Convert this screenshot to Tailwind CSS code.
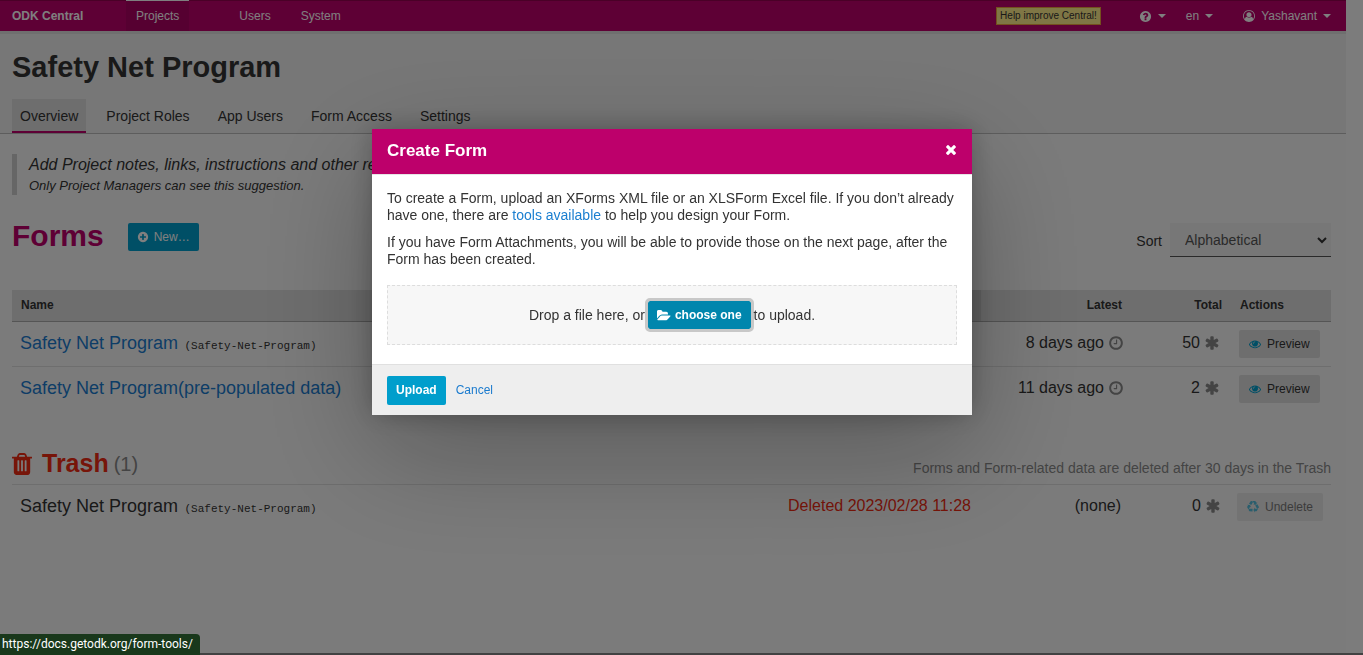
<!DOCTYPE html>
<html lang="en">
<head>
<meta charset="utf-8">
<meta name="viewport" content="width=device-width, initial-scale=1">
<title>ODK Central</title>
<script src="https://cdn.jsdelivr.net/npm/@tailwindcss/browser@4"></script>
</head>
<body class="bg-[#f7f7f7] font-['Liberation_Sans',Arial,sans-serif] text-sm text-[#333]">
<svg class="hidden" aria-hidden="true">
  <symbol id="question" viewBox="0 0 1792 1792"><path d="M1024 1376v-192q0-14-9-23t-23-9h-192q-14 0-23 9t-9 23v192q0 14 9 23t23 9h192q14 0 23-9t9-23zm256-672q0-88-55.5-163t-138.5-116-170-41q-243 0-371 213-15 24 8 42l132 100q7 6 19 6 16 0 25-12 53-68 86-92 34-24 86-24 48 0 85.5 26t37.5 59q0 38-20 61t-68 45q-63 28-115.5 86.5t-52.5 125.5v36q0 14 9 23t23 9h192q14 0 23-9t9-23q0-19 21.5-49.5t54.5-49.5q32-18 49-28.5t46-35 44.5-48 28-60.5 12.5-81zm384 192q0 209-103 385.5t-279.5 279.5-385.5 103-385.5-103-279.5-279.5-103-385.5 103-385.5 279.5-279.5 385.5-103 385.5 103 279.5 279.5 103 385.5z"/></symbol>
  <symbol id="user" viewBox="0 0 1792 1792"><path d="M896 0q182 0 348 71t286 191 191 286 71 348q0 181-70.5 347t-190.5 286-286 191.5-349 71.5-349-71-285.5-191.5-190.5-286-71-347.5 71-348 191-286 286-191 348-71zm619 1351q149-205 149-455 0-156-61-298t-164-245-245-164-298-61-298 61-245 164-164 245-61 298q0 250 149 455 66-327 306-327 131 128 313 128t313-128q240 0 306 327zm-235-647q0-159-112.5-271.5t-271.5-112.5-271.5 112.5-112.5 271.5 112.5 271.5 271.5 112.5 271.5-112.5 112.5-271.5z"/></symbol>
  <symbol id="plus" viewBox="0 0 1792 1792"><path d="M1344 960v-128q0-26-19-45t-45-19h-256v-256q0-26-19-45t-45-19h-128q-26 0-45 19t-19 45v256h-256q-26 0-45 19t-19 45v128q0 26 19 45t45 19h256v256q0 26 19 45t45 19h128q26 0 45-19t19-45v-256h256q26 0 45-19t19-45zm320-64q0 209-103 385.5t-279.5 279.5-385.5 103-385.5-103-279.5-279.5-103-385.5 103-385.5 279.5-279.5 385.5-103 385.5 103 279.5 279.5 103 385.5z"/></symbol>
  <symbol id="clock" viewBox="0 0 1792 1792"><path d="M1024 544v448q0 14-9 23t-23 9h-320q-14 0-23-9t-9-23v-64q0-14 9-23t23-9h224v-352q0-14 9-23t23-9h64q14 0 23 9t9 23zm416 352q0-148-73-273t-198-198-273-73-273 73-198 198-73 273 73 273 198 198 273 73 273-73 198-198 73-273zm224 0q0 209-103 385.5t-279.5 279.5-385.5 103-385.5-103-279.5-279.5-103-385.5 103-385.5 279.5-279.5 385.5-103 385.5 103 279.5 279.5 103 385.5z"/></symbol>
  <symbol id="asterisk" viewBox="0 0 1792 1792"><path d="M1546 1050q46 26 59.5 77.5t-12.5 97.5l-64 110q-26 46-77.5 59.5t-97.5-12.5l-266-153v307q0 52-38 90t-90 38h-128q-52 0-90-38t-38-90v-307l-266 153q-46 26-97.5 12.5t-77.5-59.5l-64-110q-26-46-12.5-97.5t59.5-77.5l266-154-266-154q-46-26-59.5-77.5t12.5-97.5l64-110q26-46 77.5-59.5t97.5 12.5l266 153v-307q0-52 38-90t90-38h128q52 0 90 38t38 90v307l266-153q46-26 97.5-12.5t77.5 59.5l64 110q26 46 12.5 97.5t-59.5 77.5l-266 154z"/></symbol>
  <symbol id="eye" viewBox="0 0 1792 1792"><path d="M1664 960q-152-236-381-353 61 104 61 225 0 185-131.5 316.5t-316.5 131.5-316.5-131.5-131.5-316.5q0-121 61-225-229 117-381 353 133 205 333.5 326.5t434.5 121.5 434.5-121.5 333.5-326.5zm-720-384q0-20-14-34t-34-14q-125 0-214.5 89.5t-89.5 214.5q0 20 14 34t34 14 34-14 14-34q0-86 61-147t147-61q20 0 34-14t14-34zm848 384q0 34-20 69-140 230-376.5 368.5t-499.5 138.5-499.5-139-376.5-368q-20-35-20-69t20-69q140-229 376.5-368t499.5-139 499.5 139 376.5 368q20 35 20 69z"/></symbol>
  <symbol id="trash" viewBox="192 128 1408 1536"><path d="M704 1376v-704q0-14-9-23t-23-9h-64q-14 0-23 9t-9 23v704q0 14 9 23t23 9h64q14 0 23-9t9-23zm256 0v-704q0-14-9-23t-23-9h-64q-14 0-23 9t-9 23v704q0 14 9 23t23 9h64q14 0 23-9t9-23zm256 0v-704q0-14-9-23t-23-9h-64q-14 0-23 9t-9 23v704q0 14 9 23t23 9h64q14 0 23-9t9-23zm-544-992h448l-48-117q-7-9-17-11h-317q-10 2-17 11zm928 32v64q0 14-9 23t-23 9h-96v948q0 83-47 143.5t-113 60.5h-832q-66 0-113-58.5t-47-141.5v-952h-96q-14 0-23-9t-9-23v-64q0-14 9-23t23-9h309l70-167q15-37 54-63t79-26h320q40 0 79 26t54 63l70 167h309q14 0 23 9t9 23z"/></symbol>
  <symbol id="recycle" viewBox="0 0 1792 1792"><path d="M836 1169l-15 368-2 22-420-29q-36-3-67-31.5t-47-65.5q-11-27-14.5-55t4-65 12-55 21.5-64 19-53q78 12 509 28zm-387-586l180 379-147-92q-63 72-111.5 144.5t-72.5 125-39.5 94.5-18.5 63l-4 21-190-357q-17-26-18-56t6-47l8-18q35-63 114-188l-140-86zm1231 517l-188 359q-12 29-36.5 46.5t-43.5 20.5l-18 4q-71 7-219 12l8 164-230-367 211-362 7 173q170 16 283 5t170-33zm-785-924q-47 63-265 435l-317-187-19-12 225-356q20-31 60-45t80-10q24 2 48.5 12t42 21 41.5 33 36 34.5 36 39.5 32 35zm655 307l212 363q18 37 12.5 76t-27.5 74q-13 20-33 37t-38 28-48.5 22-47 16-51.5 14-46 12q-34-72-265-436l313-195zm-143-226l142-83-220 373-419-20 151-86q-34-89-75-166t-75.5-123.5-64.5-80-47-46.5l-17-13 405 1q31-3 58 10.5t39 28.5l11 15q39 61 112 190z"/></symbol>
  <symbol id="folder" viewBox="0 0 1856 1792"><path d="M1815 952q0 31-31 66l-336 396q-43 51-120.5 86.5t-143.5 35.5h-1088q-34 0-60.5-13t-26.5-43q0-31 31-66l336-396q43-51 120.5-86.5t143.5-35.5h1088q34 0 60.5 13t26.5 43zm-343-344v160h-832q-94 0-197 47.5t-164 119.5l-337 396-5 6q0-4-.5-12.5t-.5-12.5v-960q0-92 66-158t158-66h320q92 0 158 66t66 158v32h544q92 0 158 66t66 158z"/></symbol>
  <symbol id="times" viewBox="302 238 1188 1316"><path d="M1490 1322q0 40-28 68l-136 136q-28 28-68 28t-68-28l-294-294-294 294q-28 28-68 28t-68-28l-136-136q-28-28-28-68t28-68l294-294-294-294q-28-28-28-68t28-68l136-136q28-28 68-28t68 28l294 294 294-294q28-28 68-28t68 28l136 136q28 28 28 68t-28 68l-294 294 294 294q28 28 28 68z"/></symbol>
  <symbol id="caret" viewBox="0 0 8 4"><path d="M0 0h8L4 4z"/></symbol>
  <symbol id="chevron" viewBox="0 0 10 7"><path d="M1 1l4 4 4-4" fill="none" stroke="currentColor" stroke-width="2"/></symbol>
</svg>

<div class="flex min-h-screen border-b-2 border-[#848484]">
<div class="min-w-0 flex-1">
  <nav class="relative flex h-[31px] items-stretch border-t border-[#95004f] bg-[#bd006b] text-xs text-white shadow-[0_3px_0_#dfdfdf]">
    <a href="#" class="flex w-[114px] items-center pl-3 font-bold">ODK Central</a>
    <a href="#" class="-mt-px ml-3 flex items-center border-t border-white bg-[#ad0062] px-[10px]">Projects</a>
    <a href="#" class="ml-10 flex items-center px-[10px]">Users</a>
    <a href="#" class="ml-[10px] flex items-center px-[10px]">System</a>
    <div class="ml-auto flex items-center pr-[15px]">
      <button class="mr-[38px] h-[18px] border border-[#e8a03c] bg-[#ffec8b] px-[3px] text-[10px] leading-4 text-[#333]">Help improve Central!</button>
      <button class="mr-5 flex items-center gap-[6px]" aria-label="Help"><svg class="size-[13px] fill-current"><use href="#question"/></svg><svg class="h-1 w-2 fill-current"><use href="#caret"/></svg></button>
      <button class="mr-[30px] flex items-center gap-[6px]">en<svg class="h-1 w-2 fill-current"><use href="#caret"/></svg></button>
      <button class="flex items-center gap-[6px]"><svg class="size-3 fill-current"><use href="#user"/></svg>Yashavant<svg class="h-1 w-2 fill-current"><use href="#caret"/></svg></button>
    </div>
  </nav>

  <header class="border-b border-[#bbb] bg-[#eee] px-3 pt-[17px]">
    <h1 class="text-[29px] leading-[38px] font-bold">Safety Net Program</h1>
    <div class="mt-[13px] flex gap-3 leading-[34px]">
      <a href="#" class="h-[34px] border-b-2 border-[#bd006b] bg-[#ddd] px-2">Overview</a>
      <a href="#" class="h-[34px] px-2">Project Roles</a>
      <a href="#" class="h-[34px] px-2">App Users</a>
      <a href="#" class="h-[34px] px-2">Form Access</a>
      <a href="#" class="h-[34px] px-2">Settings</a>
    </div>
  </header>

  <main class="pt-5 pr-[15px] pl-3">
    <div class="border-l-5 border-[#ccc] pl-3 italic">
      <p class="text-base leading-[22px]">Add Project notes, links, instructions and other resources to help your team.</p>
      <p class="text-[13px] leading-[19px]">Only Project Managers can see this suggestion.</p>
    </div>

    <div class="mt-6 flex items-start">
      <h2 class="text-[30px] leading-[34px] font-bold text-[#bd006b]">Forms</h2>
      <button class="mt-1 ml-6 flex h-7 items-center gap-[5px] rounded-xs bg-[#009ecc] px-[9px] text-xs text-white"><svg class="size-3 fill-current"><use href="#plus"/></svg>New…</button>
      <label for="sort" class="mt-3 mr-2 ml-auto leading-5">Sort</label>
      <div class="relative mt-1 w-[161px]">
        <select id="sort" class="h-[34px] w-full appearance-none border-b border-[#555] bg-[#eee] pl-[15px] text-[#555]"><option>Alphabetical</option></select>
        <svg class="pointer-events-none absolute top-[14px] right-1 h-[7px] w-[10px]"><use href="#chevron"/></svg>
      </div>
    </div>

    <table class="mt-[33px] w-full table-fixed border-collapse">
      <thead class="bg-[#ddd] text-left text-xs">
        <tr class="h-[31px]">
          <th class="border-b border-[#aaa] px-[9px]">Name</th>
          <th class="w-[200px] border-b border-[#aaa] bg-[#ccc]"></th>
          <th class="w-[150px] border-b border-[#aaa] px-[9px] text-right">Latest</th>
          <th class="w-[100px] border-b border-[#aaa] px-[9px] text-right">Total</th>
          <th class="w-[100px] border-b border-[#aaa] px-[9px]">Actions</th>
        </tr>
      </thead>
      <tbody class="text-base">
        <tr class="h-[45px] border-b border-[#ddd]">
          <td class="px-2 pb-[2px]"><a href="#" class="text-lg text-[#1b7bce]">Safety Net Program</a> <span class="ml-[2px] font-['Liberation_Mono',monospace] text-[11px]">(Safety-Net-Program)</span></td>
          <td></td>
          <td class="px-[7px] pb-[2px]"><span class="flex items-center justify-end gap-1">8 days ago<svg class="size-4 fill-[#888]"><use href="#clock"/></svg></span></td>
          <td class="px-[11px] pb-[2px]"><span class="flex items-center justify-end gap-1">50<svg class="size-4 fill-[#888]"><use href="#asterisk"/></svg></span></td>
          <td class="px-2"><button class="flex h-7 items-center gap-[6px] rounded-xs bg-[#ddd] px-[10px] text-xs"><svg class="size-3 fill-[#009ecc]"><use href="#eye"/></svg>Preview</button></td>
        </tr>
        <tr class="h-[45px]">
          <td class="px-2 pb-[2px]"><a href="#" class="text-lg text-[#1b7bce]">Safety Net Program(pre-populated data)</a></td>
          <td></td>
          <td class="px-[7px] pb-[2px]"><span class="flex items-center justify-end gap-1">11 days ago<svg class="size-4 fill-[#888]"><use href="#clock"/></svg></span></td>
          <td class="px-[11px] pb-[2px]"><span class="flex items-center justify-end gap-1">2<svg class="size-4 fill-[#888]"><use href="#asterisk"/></svg></span></td>
          <td class="px-2"><button class="flex h-7 items-center gap-[6px] rounded-xs bg-[#ddd] px-[10px] text-xs"><svg class="size-3 fill-[#009ecc]"><use href="#eye"/></svg>Preview</button></td>
        </tr>
      </tbody>
    </table>

    <div class="mt-[33px] flex h-[41px] items-center border-b border-[#ddd]">
      <h2 class="flex items-center text-[25px] font-bold text-[#ee2a12]"><svg class="mr-[10px] h-[22px] w-5 fill-current"><use href="#trash"/></svg>Trash</h2>
      <span class="ml-[5px] text-xl text-[#888]">(1)</span>
      <p class="mt-2 ml-auto text-[#888]">Forms and Form-related data are deleted after 30 days in the Trash</p>
    </div>
    <table class="w-full table-fixed text-base">
      <tbody>
        <tr class="h-11">
          <td class="px-2 pb-[2px]"><span class="text-lg">Safety Net Program</span> <span class="ml-[2px] font-['Liberation_Mono',monospace] text-[11px]">(Safety-Net-Program)</span></td>
          <td class="w-[220px] px-[10px] pb-[2px] text-right text-[#ee2a12]">Deleted 2023/02/28 11:28</td>
          <td class="w-[150px] px-[10px] pb-[2px] text-right">(none)</td>
          <td class="w-[98px] px-2 pb-[2px]"><span class="flex items-center justify-end gap-1">0<svg class="size-4 fill-[#888]"><use href="#asterisk"/></svg></span></td>
          <td class="w-[102px] px-2"><button disabled class="flex h-7 items-center gap-[6px] rounded-xs bg-[#ddd] px-[10px] text-xs opacity-65"><svg class="size-3 fill-[#009ecc]"><use href="#recycle"/></svg>Undelete</button></td>
        </tr>
      </tbody>
    </table>
  </main>
</div>
<div class="w-[17px] bg-[#f9f9f9]"></div>
</div>

<div class="fixed inset-0 bg-black/50 pt-[129px] pr-[19px]">
  <div role="dialog" aria-labelledby="dialog-title" class="mx-auto w-[600px] bg-white shadow-[0_0_24px_rgba(0,0,0,0.25),0_35px_115px_rgba(0,0,0,0.28)]">
    <div class="flex h-[46px] items-center justify-between border-b border-[#e5e5e5] bg-[#bd006b] px-[15px] text-white">
      <h4 id="dialog-title" class="text-[17px] font-bold">Create Form</h4>
      <button class="p-px pb-[5px]" aria-label="Close"><svg class="h-[11px] w-[10px] fill-current"><use href="#times"/></svg></button>
    </div>
    <div class="px-[15px] pt-[15px] pb-[19px] leading-[17px]">
      <p>To create a Form, upload an XForms XML file or an XLSForm Excel file. If you don’t already have one, there are <a href="#" class="text-[#1b7fd0]">tools available</a> to help you design your Form.</p>
      <p class="mt-[10px]">If you have Form Attachments, you will be able to provide those on the next page, after the Form has been created.</p>
      <div class="mt-[17px] flex h-[60px] items-center justify-center gap-[3px] border border-dashed border-[#ddd] bg-[#f7f7f7]">
        Drop a file here, or
        <button class="flex h-7 items-center gap-1 rounded-xs bg-[#0086ad] px-[9px] text-xs font-bold text-white outline-3 outline-[#c8c8c8]"><svg class="h-[13px] w-[14px] fill-current"><use href="#folder"/></svg>choose one</button>
        to upload.
      </div>
    </div>
    <div class="flex h-[51px] items-center gap-[10px] border-t border-[#e0e0e0] bg-[#eee] px-[15px] text-xs">
      <button class="h-[29px] rounded-xs bg-[#009ecc] px-[9px] font-bold text-white">Upload</button>
      <button class="text-[#1b7bce]">Cancel</button>
    </div>
  </div>
</div>
<div class="fixed bottom-0 left-0 h-[21px] rounded-tr-sm bg-[#19381b] pr-[7px] pl-[2px] font-[Roboto,sans-serif] text-xs leading-[21px] text-white">https://docs.getodk.org/form-tools/</div>
</body>
</html>
